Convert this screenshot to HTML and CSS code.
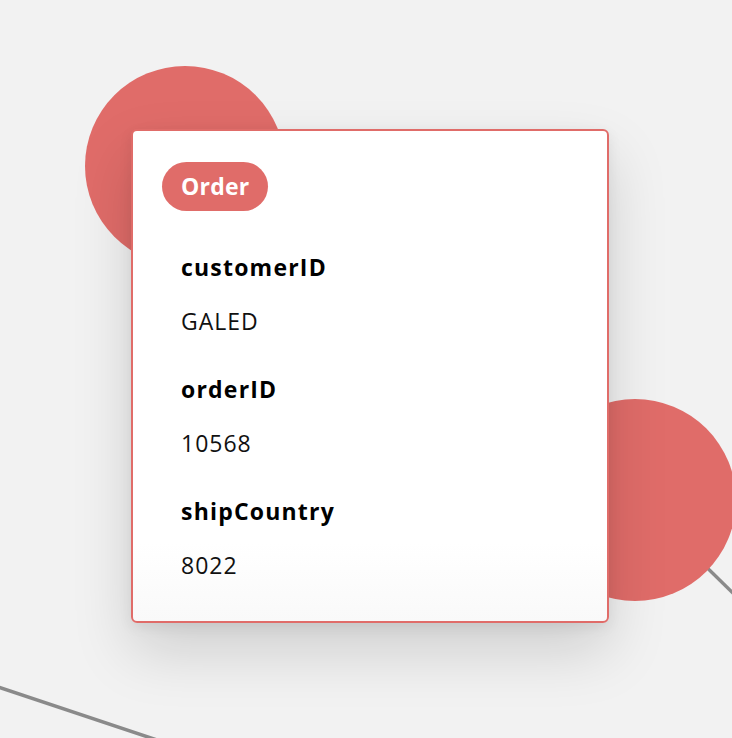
FILE: index.html
```html
<!DOCTYPE html>
<html>
<head>
<meta charset="utf-8">
<link rel="stylesheet" href="styles.css">
</head>
<body>
<div class="canvas">
  <svg class="edges" width="732" height="738" viewBox="0 0 732 738">
    <line x1="-5" y1="686" x2="160" y2="741" stroke="#8a8a8a" stroke-width="3.5"/>
    <line x1="640" y1="502" x2="740" y2="600" stroke="#8a8a8a" stroke-width="3.5"/>
  </svg>
  <div class="node node-a"></div>
  <div class="node node-b"></div>
  <div class="tooltip">
    <span class="badge">Order</span>
    <dl class="fields">
      <dt class="label">customerID</dt>
      <dd class="value">GALED</dd>
      <dt class="label">orderID</dt>
      <dd class="value">10568</dd>
      <dt class="label">shipCountry</dt>
      <dd class="value">8022</dd>
    </dl>
  </div>
</div>
</body>
</html>
```
FILE: styles.css
```css
html, body {
  margin: 0;
  padding: 0;
  background: #f2f2f2;
}
body {
  font-family: "Open Sans", "Noto Sans", sans-serif;
}
.canvas {
  position: relative;
  width: 732px;
  height: 738px;
  overflow: hidden;
  background: #f2f2f2;
}
.edges {
  position: absolute;
  left: 0;
  top: 0;
}
.node {
  position: absolute;
  border-radius: 50%;
  background: #e06c69;
}
.node-a {
  left: 85px;
  top: 66px;
  width: 200px;
  height: 200px;
}
.node-b {
  left: 534px;
  top: 399px;
  width: 202px;
  height: 202px;
}
.tooltip {
  position: absolute;
  left: 131px;
  top: 129px;
  border: 2px solid #e06c69;
  border-radius: 6px;
  background: linear-gradient(to bottom, #ffffff 84%, #f9f9f9 100%);
  box-shadow: 0 28px 60px rgba(0, 0, 0, 0.15), 0 4px 14px rgba(0, 0, 0, 0.07);
  padding: 31px 29px 0;
  box-sizing: border-box;
  width: 478px;
  height: 494px;
}
.badge {
  display: inline-block;
  height: 49px;
  line-height: 49px;
  padding: 0 19px;
  border-radius: 25px;
  background: #e06c69;
  color: #fff;
  font-weight: 700;
  font-size: 23px;
  letter-spacing: 0.2px;
  vertical-align: top;
}
.fields {
  margin: 41px 0 0;
  padding: 0 0 0 19px;
}
.label {
  font-weight: 700;
  font-size: 23px;
  line-height: 30px;
  letter-spacing: 1.2px;
  color: #000;
  margin: 0 0 24px;
}
.value {
  font-weight: 400;
  font-size: 23px;
  line-height: 30px;
  letter-spacing: 1px;
  color: #111;
  margin: 0 0 38px;
}
```
